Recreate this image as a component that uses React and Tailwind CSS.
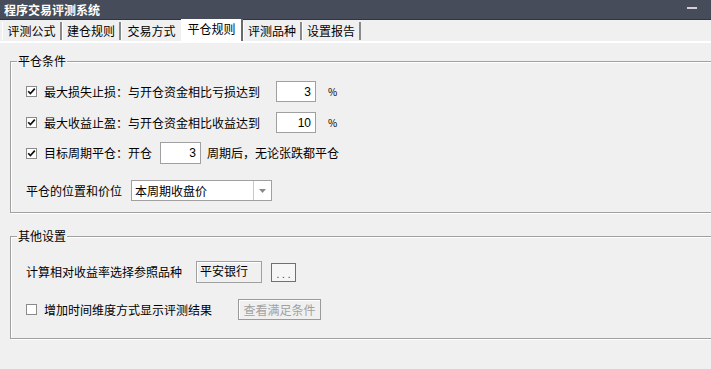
import React from "react"

const font = { fontFamily: '"Noto Sans CJK SC", "Noto Sans", sans-serif' }

const Check = ({ checked }) => (
  <span className="w-[11px] h-[11px] shrink-0 bg-white border border-[#8a8a8a] flex items-center justify-center">
    {checked && (
      <svg width="9" height="9" viewBox="0 0 9 9">
        <path d="M1.2 4.2 L3.4 6.6 L7.8 1.6" stroke="#111" strokeWidth="1.7" fill="none" />
      </svg>
    )}
  </span>
)

const NumBox = ({ value, w = "w-[40px]", h = "h-[21px]" }) => (
  <div
    className={`${w} ${h} bg-white border border-[#a0a0a0] flex items-center justify-end pr-[4px] text-[12px] text-black`}
    style={{ fontFamily: '"Liberation Sans", Arial, sans-serif' }}
  >
    {value}
  </div>
)

const Group = ({ title, className, children }) => (
  <div
    className={`relative ml-[10px] mr-[-4px] border border-[#a0a0a0] shadow-[inset_1px_1px_0_#ffffff,1px_1px_0_#ffffff] ${className}`}
  >
    <span className="absolute left-[6px] top-[-9px] px-[1px] bg-[#f0f0f0] text-[12px] leading-[16px] text-black">
      {title}
    </span>
    {children}
  </div>
)

const tabs = [
  { label: "评测公式", w: "w-[60px]" },
  { label: "建仓规则", w: "w-[59px]" },
  { label: "交易方式", w: "w-[60px]" },
  { label: "平仓规则", w: "w-[62px]", active: true },
  { label: "评测品种", w: "w-[59px]" },
  { label: "设置报告", w: "w-[59px]" },
]

export default function App() {
  return (
    <div className="w-[711px] h-[369px] overflow-hidden bg-[#f0f0f0] flex flex-col" style={font}>
      {/* title bar */}
      <div className="h-[20px] shrink-0 bg-[#464c5a] border-b border-[#30343e] flex items-center justify-between pl-[4px] pr-[14px]">
        <span className="text-white text-[12px] font-bold leading-none">程序交易评测系统</span>
        <span className="w-[10px] h-[2px] bg-[#d8cdd8] mb-[4px]"></span>
      </div>

      {/* tabs */}
      <div className="h-[23px] shrink-0 flex items-end pl-[2px] border-b-2 border-white">
        {tabs.map((t, i) =>
          t.active ? (
            <div
              key={t.label}
              className={`${t.w} h-[22px] bg-white border-l border-white border-r-2 border-r-[#6a6a6a] flex items-center justify-center text-[12px] text-black pb-[2px]`}
            >
              {t.label}
            </div>
          ) : (
            <div
              key={t.label}
              className={`${t.w} h-[18px] mb-[1px] border-l border-white flex items-center justify-center text-[12px] text-black ${i === 2 ? "" : "border-r-2 border-r-[#8a8a8a]"}`}
            >
              {t.label}
            </div>
          )
        )}
      </div>

      {/* 平仓条件 */}
      <Group title="平仓条件" className="mt-[18px] pt-[19px] pb-[11px]">
        <div className="flex items-center h-[21px] pl-[15px] text-[12px] text-black">
          <Check checked />
          <span className="ml-[7px] w-[232px]">最大损失止损：与开仓资金相比亏损达到</span>
          <NumBox value="3" />
          <span className="ml-[12px] text-[10px]">%</span>
        </div>
        <div className="flex items-center h-[21px] mt-[10px] pl-[15px] text-[12px] text-black">
          <Check checked />
          <span className="ml-[7px] w-[232px]">最大收益止盈：与开仓资金相比收益达到</span>
          <NumBox value="10" />
          <span className="ml-[12px] text-[10px]">%</span>
        </div>
        <div className="flex items-center h-[22px] mt-[9px] pl-[15px] text-[12px] text-black">
          <Check checked />
          <span className="ml-[7px] w-[116px]">目标周期平仓：开仓</span>
          <NumBox value="3" w="w-[41px]" h="h-[22px]" />
          <span className="ml-[6px]">周期后，无论张跌都平仓</span>
        </div>
        <div className="flex items-center h-[21px] mt-[16px] pl-[15px] text-[12px] text-black">
          <span className="w-[105px]">平仓的位置和价位</span>
          <div className="w-[141px] h-[21px] bg-white border border-[#a0a0a0] flex">
            <span className="flex-1 flex items-center pl-[3px]">本周期收盘价</span>
            <span className="w-[18px] border-l border-[#c8c8c8] flex items-center justify-center">
              <svg width="7" height="4" viewBox="0 0 7 4">
                <path d="M0 0 H7 L3.5 4 Z" fill="#8a8a8a" />
              </svg>
            </span>
          </div>
        </div>
      </Group>

      {/* 其他设置 */}
      <Group title="其他设置" className="mt-[23px] pt-[24px] pb-[18px]">
        <div className="flex items-center h-[22px] pl-[15px] text-[12px] text-black">
          <span className="w-[170px]">计算相对收益率选择参照品种</span>
          <div className="w-[66px] h-[22px] border border-[#a0a0a0] shadow-[inset_1px_1px_0_#ffffff] flex items-center pl-[3px] pb-[3px]">
            平安银行
          </div>
          <div
            className="ml-[9px] w-[25px] h-[19px] bg-[#f6f6f6] border border-[#707070] flex items-end justify-center text-[10px] leading-[12px] text-[#333]"
            style={{ fontFamily: '"Liberation Sans", Arial, sans-serif' }}
          >
            . . .
          </div>
        </div>
        <div className="flex items-center h-[21px] mt-[16px] pl-[15px] text-[12px] text-black">
          <Check />
          <span className="ml-[7px] w-[194px]">增加时间维度方式显示评测结果</span>
          <div className="w-[83px] h-[21px] border border-[#9a9a9a] shadow-[inset_1px_1px_0_#ffffff] bg-[#f0f0f0] flex items-center justify-center text-[#a0a0a0]">
            查看满足条件
          </div>
        </div>
      </Group>
    </div>
  )
}
